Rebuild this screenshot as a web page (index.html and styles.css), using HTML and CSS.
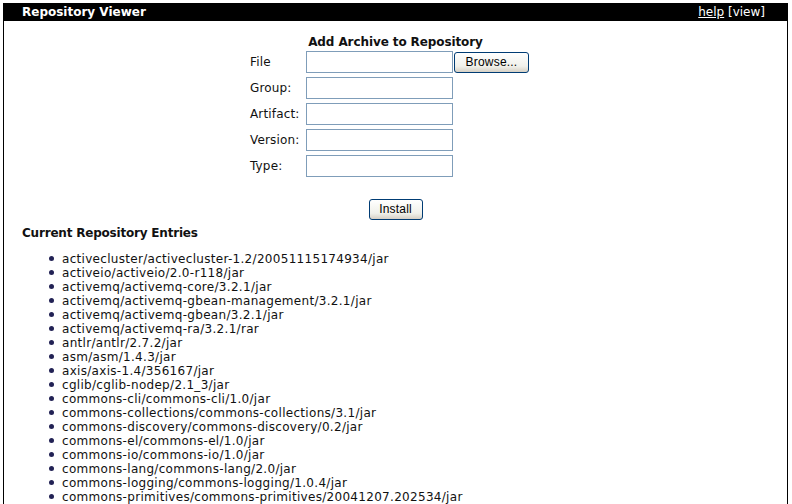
FILE: index.html
```html
<!DOCTYPE html>
<html>
<head>
<meta charset="utf-8">
<link rel="stylesheet" href="styles.css">
</head>
<body>
<div class="frame">
  <div class="titlebar">
    <span class="title">Repository Viewer</span>
    <span class="links"><a class="help" href="#">help</a> [view]</span>
  </div>
  <div class="formwrap">
    <div class="formtitle">Add Archive to Repository</div>
    <div class="formgrid">
      <div class="label">File</div>
      <div class="field"><span class="input"></span><span class="btn browse">Browse...</span></div>
      <div class="label">Group:</div>
      <div class="field"><span class="input"></span></div>
      <div class="label">Artifact:</div>
      <div class="field"><span class="input"></span></div>
      <div class="label">Version:</div>
      <div class="field"><span class="input"></span></div>
      <div class="label">Type:</div>
      <div class="field"><span class="input"></span></div>
    </div>
    <div class="install-row"><span class="btn install">Install</span></div>
  </div>
  <div class="content">
    <div class="section-title">Current Repository Entries</div>
    <ul class="entries">
      <li>activecluster/activecluster-1.2/20051115174934/jar</li>
      <li>activeio/activeio/2.0-r118/jar</li>
      <li>activemq/activemq-core/3.2.1/jar</li>
      <li>activemq/activemq-gbean-management/3.2.1/jar</li>
      <li>activemq/activemq-gbean/3.2.1/jar</li>
      <li>activemq/activemq-ra/3.2.1/rar</li>
      <li>antlr/antlr/2.7.2/jar</li>
      <li>asm/asm/1.4.3/jar</li>
      <li>axis/axis-1.4/356167/jar</li>
      <li>cglib/cglib-nodep/2.1_3/jar</li>
      <li>commons-cli/commons-cli/1.0/jar</li>
      <li>commons-collections/commons-collections/3.1/jar</li>
      <li>commons-discovery/commons-discovery/0.2/jar</li>
      <li>commons-el/commons-el/1.0/jar</li>
      <li>commons-io/commons-io/1.0/jar</li>
      <li>commons-lang/commons-lang/2.0/jar</li>
      <li>commons-logging/commons-logging/1.0.4/jar</li>
      <li>commons-primitives/commons-primitives/20041207.202534/jar</li>
    </ul>
  </div>
</div>
</body>
</html>
```

FILE: styles.css
```css
html, body {
  margin: 0;
  padding: 0;
  background: #fff;
  overflow: hidden;
}
body {
  font-family: "DejaVu Sans", Verdana, sans-serif;
  font-size: 12px;
  color: #111;
}
.frame {
  margin: 3px 4px 0 3px;
  border-left: 1px solid #000;
  border-right: 1px solid #000;
  height: 520px;
}
.titlebar {
  background: #000;
  color: #fff;
  height: 18px;
  display: flex;
  align-items: center;
  justify-content: space-between;
  padding: 0 22px 0 18px;
}
.title {
  font-weight: bold;
}
.links a {
  color: #fff;
}
.formwrap {
  display: flex;
  flex-direction: column;
  align-items: center;
  padding-top: 13px;
}
.formtitle {
  font-weight: bold;
  letter-spacing: -0.1px;
  height: 16px;
  line-height: 16px;
  margin-bottom: 1px;
}
.formgrid {
  display: grid;
  grid-template-columns: 56px auto;
  row-gap: 4px;
  margin-right: 12px;
  letter-spacing: 0.15px;
}
.label {
  height: 22px;
  line-height: 23px;
}
.field {
  display: flex;
  align-items: center;
  height: 22px;
}
.input {
  display: inline-block;
  box-sizing: border-box;
  width: 147px;
  height: 22px;
  border: 1px solid #7f9db9;
  background: #fff;
}
.btn {
  display: inline-block;
  box-sizing: border-box;
  border: 1px solid #003c74;
  border-radius: 3px;
  background: linear-gradient(#ffffff, #f0f0ea 70%, #d6d0c5);
  font-family: "Liberation Sans", Arial, sans-serif;
  font-size: 12px;
  letter-spacing: 0.2px;
  color: #000;
  text-align: center;
  height: 21px;
  line-height: 19px;
}
.browse {
  width: 75px;
  margin-left: 1px;
}
.install-row {
  margin-top: 22px;
}
.install {
  width: 54px;
}
.content {
  padding: 0 0 0 18px;
}
.section-title {
  font-weight: bold;
  letter-spacing: -0.2px;
  margin-top: 5px;
  height: 16px;
  line-height: 16px;
}
.entries {
  margin: 11px 0 0 0;
  padding-left: 40px;
  line-height: 14px;
  letter-spacing: 0.3px;
  list-style: none;
}
.entries li::before {
  content: "";
  display: inline-block;
  width: 5px;
  height: 5px;
  border-radius: 50%;
  background: #222255;
  margin-left: -13px;
  margin-right: 8px;
  vertical-align: 2px;
}
```
